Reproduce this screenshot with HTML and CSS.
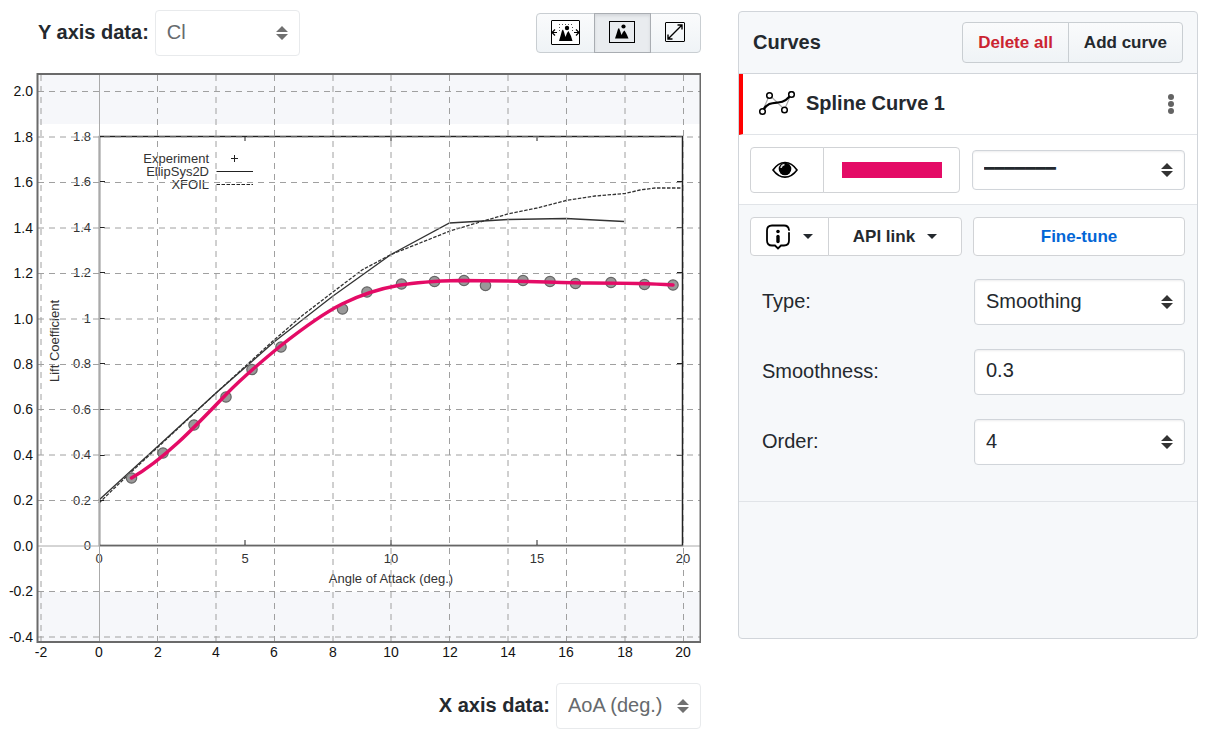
FILE: index.html
```html
<!DOCTYPE html>
<html lang="en">
<head>
<meta charset="utf-8">
<title>Curve digitizer</title>
<link rel="stylesheet" href="styles.css">
</head>
<body>
<svg class="defs" width="0" height="0" aria-hidden="true">
  <symbol id="sort" viewBox="0 0 12 14"><path d="M0 6 6 0l6 6zM0 8h12l-6 6z" fill="currentColor"/></symbol>
</svg>
<main class="page">
  <section class="plot">
    <div class="toolbar">
      <div class="axis-field">
        <label for="y-axis">Y axis data:</label>
        <span class="select muted"><select id="y-axis" disabled><option>Cl</option></select><svg class="arrows"><use href="#sort"/></svg></span>
      </div>
      <div class="group view-group">
        <button type="button" class="btn view-fit" aria-label="Fit data">
          <svg width="29" height="25" viewBox="0 0 29 25"><rect x=".5" y=".5" width="28" height="24" rx=".5" fill="#fff" stroke="#000"/><path d="M8 21 9.500 16 11 10.500 12 9.500 13 12 14.500 17 16 13 17.500 11 19 14 20 16 21.500 21z"/><circle cx="16" cy="8" r="2.200"/><path d="M8 4.500h14M8.500 7v6M21.500 7v6" fill="none" stroke="#555" stroke-dasharray="1 2"/><path d="M1 12.500h5M4 9.500 1 12.500 4 15.500M28 12.500h-5M25 9.500 28 12.500 25 15.500" fill="none" stroke="#000" stroke-width="1.200"/></svg>
        </button>
        <button type="button" class="btn view-image" aria-label="Fit image" aria-pressed="true">
          <svg width="26" height="22" viewBox="0 0 26 22"><rect x=".5" y=".5" width="25" height="21" fill="none" stroke="#000"/><path d="M6 17.500 7.500 13 9 8 10 7 11 9.500 12.500 14 14 11 15.500 9.500 17 12 18 14 19.500 17.500z"/><circle cx="14.500" cy="5.500" r="2.100"/></svg>
        </button>
        <button type="button" class="btn view-full" aria-label="Full screen">
          <svg width="20" height="20" viewBox="0 0 20 20"><rect x=".5" y=".5" width="19" height="19" rx=".5" fill="none" stroke="#000"/><path d="M3 17 17 3M12.500 3H17v4.500M3 12.500V17h4.500" fill="none" stroke="#000" stroke-width="1.400"/></svg>
        </button>
      </div>
    </div>
    <svg class="chart" viewBox="0 66 701 600" role="img" aria-label="Lift coefficient against angle of attack">
      <rect x="38" y="74" width="662" height="568" fill="#f6f7fa"/>
      <rect x="38" y="124" width="662" height="468" fill="#fff"/>
      <g class="scan-lines">
        <rect x="99.500" y="136.500" width="583" height="409" stroke-width="1.500"/>
        <path d="M245 136v5M391 136v5M537 136v5M245 546v-6M391 546v-6M537 546v-6M100 181.500h5M100 227.500h5M100 272.500h5M100 318.500h5M100 363.500h5M100 409.500h5M100 455.500h5M100 500.500h5M683 181.500h-6M683 227.500h-6M683 272.500h-6M683 318.500h-6M683 363.500h-6M683 409.500h-6M683 455.500h-6M683 500.500h-6"/>
        <path d="M216.500 171.500h36.500M231 158.500h7M234.500 155v7"/>
        <path d="M216.500 184.500h36.500" stroke-dasharray="3.500 1.500"/>
        <path class="series" d="M99 500 157 447 216 393 274 342 333 296 391 254.500 449.500 223 508 219.500 566 218.500 624 221.500"/>
        <path class="series" stroke-dasharray="3.500 1.500" d="M99 503 128 475 157 448 216 393 274 340 303 315 333 292 362 270 391 254.500 420 243 450 231 480 222 508 214 537 208 566 200.500 595 196 625 193.500 640 190 655 188 683 188"/>
      </g>
      <g class="scan-text end">
        <text x="91" y="141">1.8</text><text x="91" y="186">1.6</text><text x="91" y="232">1.4</text><text x="91" y="277">1.2</text><text x="91" y="323">1</text><text x="91" y="368">0.8</text><text x="91" y="414">0.6</text><text x="91" y="459">0.4</text><text x="91" y="505">0.2</text><text x="91" y="550">0</text>
        <text x="209" y="163">Experiment</text><text x="209" y="176">EllipSys2D</text><text x="209" y="189">XFOIL</text>
      </g>
      <g class="scan-text middle">
        <text x="99" y="563">0</text><text x="245" y="563">5</text><text x="391" y="563">10</text><text x="537" y="563">15</text><text x="683" y="563">20</text>
        <text x="391" y="583">Angle of Attack (deg.)</text>
        <text transform="translate(59 341) rotate(-90)">Lift Coefficient</text>
      </g>
      <g class="grid">
        <path d="M41 642V74M157.500 642V74M216 642V74M274.500 642V74M333 642V74M391 642V74M449.500 642V74M508 642V74M566.500 642V74M625 642V74M683.500 642V74"/>
        <path d="M38 91.500H700M38 137H700M38 182.500H700M38 228H700M38 273.500H700M38 319H700M38 364.500H700M38 409.500H700M38 455H700M38 500.500H700M38 591.500H700M38 637H700"/>
      </g>
      <path class="zero" d="M99.500 74V642M38 546H700"/>
      <rect class="frame" x="37.500" y="74" width="663" height="568"/>
      <g class="ticks end">
        <text x="33" y="96">2.0</text><text x="33" y="142">1.8</text><text x="33" y="187">1.6</text><text x="33" y="233">1.4</text><text x="33" y="278">1.2</text><text x="33" y="324">1.0</text><text x="33" y="369">0.8</text><text x="33" y="414">0.6</text><text x="33" y="460">0.4</text><text x="33" y="505">0.2</text><text x="33" y="551">0.0</text><text x="33" y="596">-0.2</text><text x="33" y="642">-0.4</text>
      </g>
      <g class="ticks middle">
        <text x="41" y="657">-2</text><text x="99" y="657">0</text><text x="158" y="657">2</text><text x="216" y="657">4</text><text x="274" y="657">6</text><text x="333" y="657">8</text><text x="391" y="657">10</text><text x="450" y="657">12</text><text x="508" y="657">14</text><text x="566" y="657">16</text><text x="625" y="657">18</text><text x="683" y="657">20</text>
      </g>
      <g class="points">
        <circle cx="131.500" cy="478" r="5.200"/><circle cx="163" cy="453" r="5.200"/><circle cx="194" cy="425" r="5.200"/><circle cx="226" cy="397" r="5.200"/><circle cx="252" cy="369.500" r="5.200"/><circle cx="281" cy="347" r="5.200"/><circle cx="342.500" cy="309" r="5.200"/><circle cx="367" cy="292" r="5.200"/><circle cx="401.500" cy="284" r="5.200"/><circle cx="434.500" cy="281.500" r="5.200"/><circle cx="464" cy="280.500" r="5.200"/><circle cx="485.500" cy="285.500" r="5.200"/><circle cx="523" cy="280.500" r="5.200"/><circle cx="550" cy="281.500" r="5.200"/><circle cx="575.500" cy="283.500" r="5.200"/><circle cx="611" cy="282.500" r="5.200"/><circle cx="644.500" cy="284.500" r="5.200"/><circle cx="673" cy="285" r="5.200"/>
      </g>
      <path class="spline" d="M131.500 478C163 460 192 430 226 394.500C244 376 262 361 281 345.500C302 329 322 314 342 304C382 284.500 415 281.500 460 280.500C520 280.500 560 283 590 283S650 283.500 673 285"/>
    </svg>
    <div class="axis-field x-field">
      <label for="x-axis">X axis data:</label>
      <span class="select muted"><select id="x-axis" disabled><option>AoA (deg.)</option></select><svg class="arrows"><use href="#sort"/></svg></span>
    </div>
  </section>

  <aside class="panel">
    <header class="panel-head">
      <h2>Curves</h2>
      <div class="group">
        <button type="button" class="btn danger">Delete all</button>
        <button type="button" class="btn">Add curve</button>
      </div>
    </header>
    <div class="curve-row">
      <svg width="38" height="26" viewBox="0 0 38 26" fill="none" aria-hidden="true"><path d="M4.500 20 11.500 4l15 14.500L33.500 2.500" stroke="#aaa" stroke-width="1.200"/><path d="M4.500 20C9 12 14 12 20 11.500S30 9 33.500 2.500" stroke="#000" stroke-width="2.200"/><g fill="#fff" stroke="#000" stroke-width="1.500"><circle cx="4.500" cy="20.500" r="2.800"/><circle cx="11.500" cy="4.500" r="2.800"/><circle cx="26.500" cy="19" r="2.800"/><circle cx="33.500" cy="3.500" r="2.800"/></g></svg>
      <h3>Spline Curve 1</h3>
      <button type="button" class="menu" aria-label="Curve menu"><svg width="6" height="20" viewBox="0 0 6 20" fill="#636363"><circle cx="3" cy="3" r="3"/><circle cx="3" cy="10" r="3"/><circle cx="3" cy="17" r="3"/></svg></button>
    </div>
    <div class="style-row">
      <div class="group">
        <button type="button" class="btn plain eye" aria-label="Toggle visibility"><svg width="26" height="18" viewBox="0 0 26 18"><path d="M1 9C8-1 18-1 25 9C18 18.500 8 18.500 1 9Z" fill="#fff" stroke="#000" stroke-width="1.600"/><circle cx="13" cy="8" r="6.300"/><path d="M9 7Q9.500 4 12.500 3.500" fill="none" stroke="#ddd" stroke-width="1.500"/></svg></button>
        <button type="button" class="btn plain colour" aria-label="Curve colour"><span class="swatch"></span></button>
      </div>
      <span class="select line-select"><select aria-label="Line style"><option>━━━━━━━</option></select><svg class="arrows"><use href="#sort"/></svg></span>
    </div>
    <div class="settings">
      <div class="actions">
        <div class="group">
          <button type="button" class="btn plain info" aria-label="Curve information"><svg width="24" height="26" viewBox="0 0 24 26" fill="none" stroke="#000" stroke-width="1.800" stroke-linecap="round"><path d="M23 9v7.500q0 5-5 5h-3l-3 3-3-3H6q-5 0-5-5V6.500q0-5 5-5h12q4.500 0 5 4.500"/><path d="M12 12.500v5" stroke-width="3.400"/><circle cx="12" cy="7.500" r="1.200" fill="#000" stroke-width="1.200"/></svg><span class="caret"></span></button>
          <button type="button" class="btn plain api">API link<span class="caret"></span></button>
        </div>
        <button type="button" class="btn plain tune">Fine-tune</button>
      </div>
      <div class="field"><label for="type">Type:</label><span class="select"><select id="type"><option>Smoothing</option></select><svg class="arrows"><use href="#sort"/></svg></span></div>
      <div class="field"><label for="smooth">Smoothness:</label><input id="smooth" type="text" value="0.3"></div>
      <div class="field"><label for="order">Order:</label><span class="select"><select id="order"><option>4</option></select><svg class="arrows"><use href="#sort"/></svg></span></div>
    </div>
  </aside>
</main>
</body>
</html>
```
FILE: styles.css
```css
* { box-sizing: border-box; }
body { margin: 0; background: #fff; color: #24292e; font: 20px/30px "Liberation Sans", Arial, sans-serif; }
button, input, select { font: inherit; color: inherit; margin: 0; }
h2, h3 { margin: 0; font-size: 20px; line-height: 30px; }
.defs { position: absolute; }
.page { display: grid; grid-template-columns: minmax(0, 1fr) 460px; column-gap: 37px; align-items: start; padding: 10px 10px 10px 0; }

.toolbar { display: flex; justify-content: space-between; align-items: center; padding-left: 38px; }
.axis-field { display: flex; align-items: center; gap: 6px; font-weight: 700; }
.axis-field label { padding-bottom: 2px; }
.x-field { justify-content: flex-end; margin-top: 17px; }
.axis-field .select { width: 145px; font-weight: 400; }
.select { position: relative; display: block; }
select, input { appearance: none; display: block; width: 100%; height: 46px; padding: 0 11px 3px; border: 1px solid #d1d5da; border-radius: 4px; background: #fff; box-shadow: inset 0 1px 2px rgba(27, 31, 35, .08); outline: none; }
.arrows { position: absolute; right: 12px; top: 16px; width: 12px; height: 14px; color: #333; pointer-events: none; }
.muted select { color: #666a6d; border-color: #e8eaec; box-shadow: none; opacity: 1; }
.muted .arrows { color: #707070; }

.group { display: flex; }
.btn { display: flex; align-items: center; justify-content: center; height: 41px; padding: 0 15px; border: 1px solid #c9ced2; border-radius: 4px; background: linear-gradient(#fafbfc, #eff3f6); font-size: 17px; line-height: 24px; font-weight: 700; white-space: nowrap; }
.group .btn + .btn { margin-left: -1px; }
.group .btn:first-child { border-radius: 4px 0 0 4px; }
.group .btn:last-child { border-radius: 0 4px 4px 0; }
.group .btn:not(:first-child):not(:last-child) { border-radius: 0; }
.view-group .btn { height: 40px; padding: 0 2px 2px 0; }
.view-group .view-fit { width: 59px; padding-right: 0; }
.view-group .view-image { width: 57px; background: #e9ecef; border-color: #a9adb2; box-shadow: inset 0 2px 3px rgba(27, 31, 35, .1); z-index: 1; }
.view-group .view-full { width: 51px; }
.danger { color: #cb2431; }
.plain { background: #fff; border-color: #d1d3d6; }

.chart { display: block; width: 100%; height: auto; margin-top: 10px; font-family: "Liberation Sans", Arial, sans-serif; }
.scan-lines { fill: none; stroke: #222; stroke-width: 1; }
.scan-lines .series { stroke: #333; stroke-width: 1.3; }
.scan-text { font-size: 13px; fill: #333; }
.ticks { font-size: 14px; fill: #111; }
.end { text-anchor: end; }
.middle { text-anchor: middle; }
.grid { fill: none; stroke: #a0a0a0; stroke-width: 1; stroke-dasharray: 6 5; }
.zero { fill: none; stroke: #aaa; stroke-width: 1; }
.frame { fill: none; stroke: #6a6a6a; stroke-width: 2; }
.points { fill: #999; stroke: #666; stroke-width: 1.2; }
.spline { fill: none; stroke: #e40b66; stroke-width: 3.5; stroke-linecap: round; }

.panel { margin-top: 1px; min-height: 628px; border: 1px solid #d1d5da; border-radius: 4px; background: #f6f8fa; }
.panel-head { display: flex; justify-content: space-between; align-items: center; height: 62px; padding: 0 14px; border-bottom: 1px solid #d1d5da; }
.panel-head h2 { padding-bottom: 2px; }
.curve-row { display: flex; align-items: center; height: 61px; padding: 0 23px 0 15px; border-left: 4px solid #f00; border-bottom: 1px solid #e1e4e8; background: #fff; }
.curve-row h3 { flex: 1; margin: 0 0 2px 10px; }
.menu { display: flex; padding: 0; border: 0; background: none; }
.style-row { display: flex; align-items: center; justify-content: space-between; height: 70px; padding: 0 12px 0 11px; border-bottom: 1px solid #e1e4e8; background: #fff; }
.style-row .btn { height: 46px; }
.group .eye { width: 74px; padding: 0 5px 0 0; }
.group .colour { width: 137px; padding: 0 17px; }
.swatch { width: 100px; height: 16px; background: #e40b66; }
.line-select { width: 213px; }
.line-select select { height: 40px; font: 17px/24px "Liberation Mono", monospace; padding-bottom: 0; }
.line-select .arrows { top: 13px; }
.settings { display: flex; flex-direction: column; padding: 12px 12px 36px 11px; border-bottom: 1px solid #e1e4e8; }
.actions { display: flex; justify-content: space-between; margin-bottom: 23px; }
.actions .btn { height: 39px; }
.group .info { width: 79px; gap: 13px; }
.group .api { width: 134px; gap: 12px; }
.tune { width: 212px; color: #0366d6; }
.caret { border: 5px solid transparent; border-top-color: currentColor; border-bottom: 0; }
.field { display: grid; grid-template-columns: 1fr 211px; align-items: center; padding-left: 12px; }
.field + .field { margin-top: 24px; }
.field label { padding-bottom: 2px; }
```
